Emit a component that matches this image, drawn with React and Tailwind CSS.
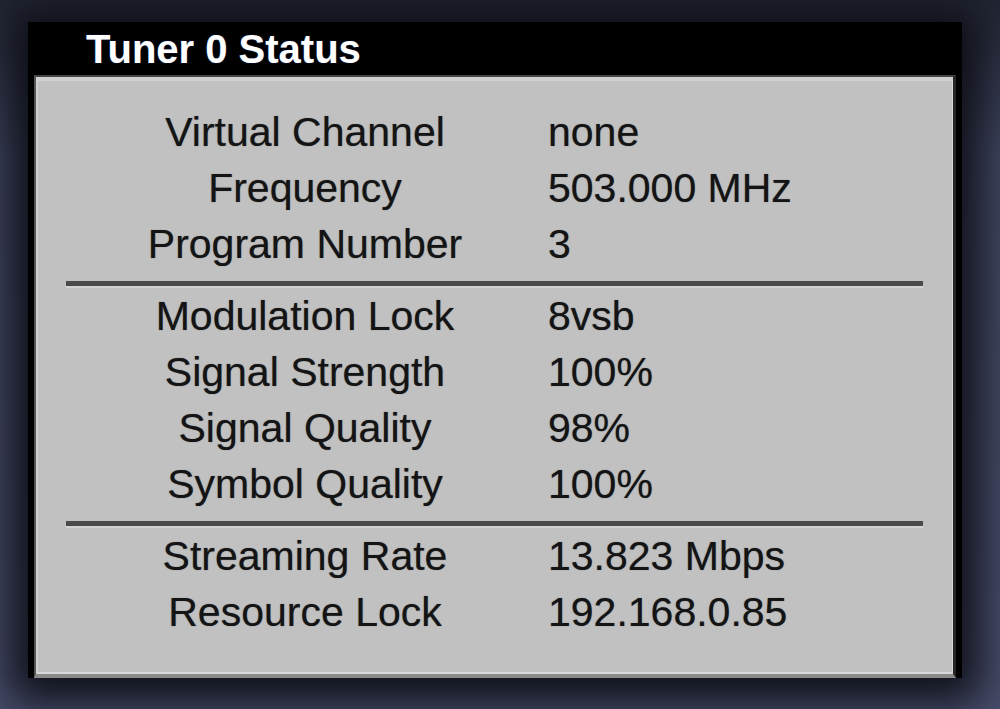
import React from "react";

const groups = [
  [
    ["Virtual Channel", "none"],
    ["Frequency", "503.000 MHz"],
    ["Program Number", "3"],
  ],
  [
    ["Modulation Lock", "8vsb"],
    ["Signal Strength", "100%"],
    ["Signal Quality", "98%"],
    ["Symbol Quality", "100%"],
  ],
  [
    ["Streaming Rate", "13.823 Mbps"],
    ["Resource Lock", "192.168.0.85"],
  ],
];

function Row({ label, value }) {
  return (
    <div className="flex h-[56px] pl-[84px] text-[41px] leading-[56px] text-[#141414] whitespace-nowrap [text-shadow:0_0_1px_rgba(20,20,40,0.55)]">
      <div className="w-[370px] text-center">{label}</div>
      <div className="ml-[58px]">{value}</div>
    </div>
  );
}

function Separator() {
  return <div className="mx-[30px] mt-[9px] h-[7px] bg-[#4a4a4a] border-b-2 border-[#d3d3d3]" />;
}

export default function App() {
  return (
    <div
      className="w-full h-[709px] overflow-hidden pl-[28px] pt-[22px] bg-[linear-gradient(to_bottom,#232634,#424763_22%,#4a4f6e)]"
      style={{ fontFamily: '"Liberation Sans", Arial, sans-serif' }}
    >
      <div className="w-[934px] h-[656px] bg-black flex flex-col shadow-[0_6px_40px_18px_rgba(8,9,14,0.9)]">
        <div className="h-[53px] pl-[58px] pt-[2px] text-[40px] font-bold leading-[50px] text-white [text-shadow:0_0_2px_#1c2c5c,0_1px_1px_#000]">
          Tuner 0 Status
        </div>
        <div className="mx-[6px] flex-1 bg-[#c1c1c1] border-t-2 border-l-2 border-r-[3px] border-b-4 border-t-[#444] border-l-[#555] border-r-[#262626] border-b-[#8a8a8a] shadow-[inset_2px_4px_0_#d0d0d0,inset_-1px_-2px_0_#d8d8d8] pt-[27px]">
          {groups.map((rows, gi) => (
            <div key={gi}>
              {gi > 0 && <Separator />}
              {rows.map(([label, value]) => (
                <Row key={label} label={label} value={value} />
              ))}
            </div>
          ))}
        </div>
      </div>
    </div>
  );
}
